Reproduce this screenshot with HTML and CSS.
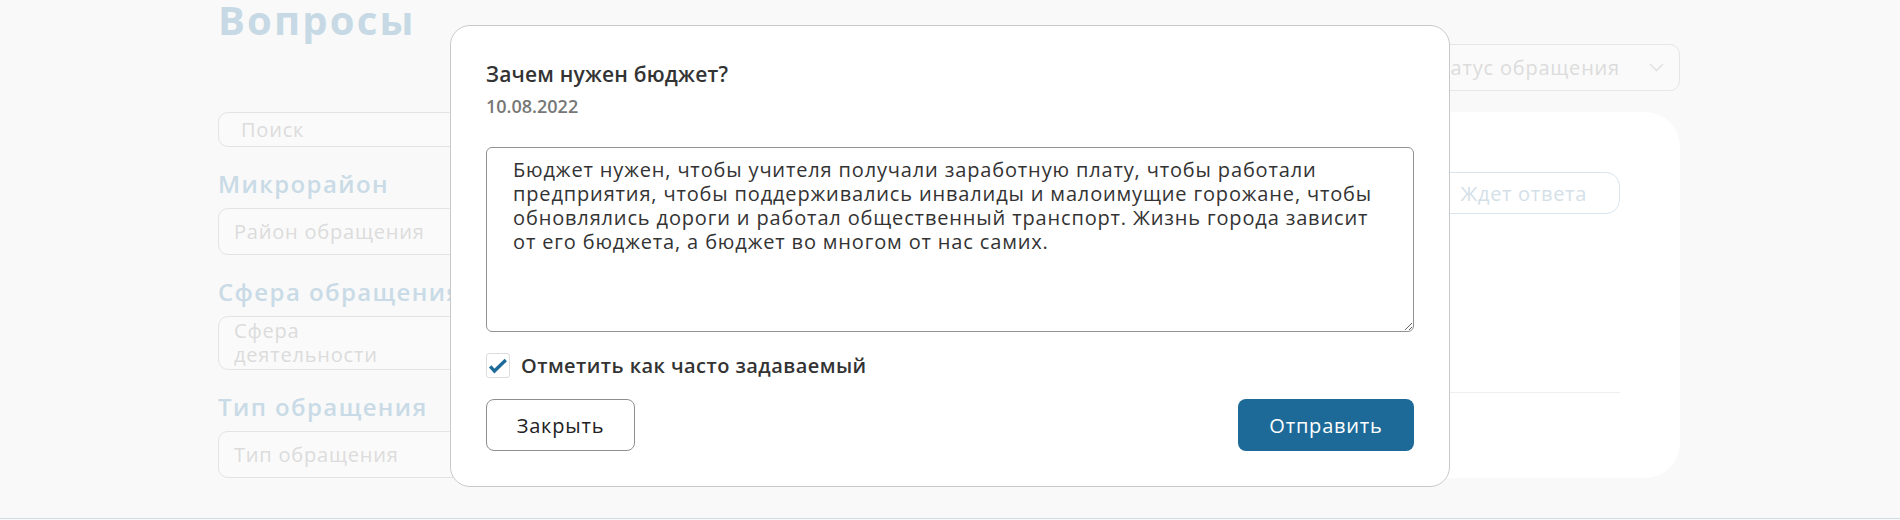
FILE: index.html
```html
<!DOCTYPE html>
<html lang="ru">
<head>
<meta charset="utf-8">
<title>Вопросы</title>
<link rel="stylesheet" href="styles.css">
</head>
<body>
<div class="page">
  <header class="page-head">
    <h1 class="page-title">Вопросы</h1>
    <div class="select">
      <span class="select-text">Статус обращения</span>
      <svg class="chevron" width="15" height="9" viewBox="0 0 15 9" aria-hidden="true"><path d="M1 1l6.5 6.5L14 1" fill="none" stroke="#e3e3e3" stroke-width="1.6"/></svg>
    </div>
  </header>
  <div class="layout">
    <aside class="sidebar">
      <div class="field field-search">Поиск</div>
      <h2 class="filter-title">Микрорайон</h2>
      <div class="field">Район обращения</div>
      <h2 class="filter-title">Сфера обращения</h2>
      <div class="field field-multi"><span class="field-multi-text">Сфера деятельности</span></div>
      <h2 class="filter-title">Тип обращения</h2>
      <div class="field">Тип обращения</div>
    </aside>
    <main class="card">
      <div class="question">
        <div class="question-body">
          <div class="question-title">Зачем нужен бюджет?</div>
          <div class="question-date">10.08.2022</div>
        </div>
        <span class="tag">Ждет ответа</span>
      </div>
    </main>
  </div>
</div>
<footer class="footer"></footer>

<div class="modal" role="dialog" aria-modal="true">
  <h3 class="modal-title">Зачем нужен бюджет?</h3>
  <div class="modal-date">10.08.2022</div>
  <textarea class="answer">Бюджет нужен, чтобы учителя получали заработную плату, чтобы работали предприятия, чтобы поддерживались инвалиды и малоимущие горожане, чтобы обновлялись дороги и работал общественный транспорт. Жизнь города зависит от его бюджета, а бюджет во многом от нас самих.</textarea>
  <label class="check">
    <span class="check-box"><svg width="24" height="24" viewBox="0 0 24 24" aria-hidden="true"><path d="M3.5 12.5l4.6 5L20.5 5.5" fill="none" stroke="#1d6a99" stroke-width="3.6"/></svg></span>
    <span class="check-label">Отметить как часто задаваемый</span>
  </label>
  <div class="modal-actions">
    <button class="btn btn-outline" type="button">Закрыть</button>
    <button class="btn btn-primary" type="button">Отправить</button>
  </div>
</div>
</body>
</html>
```
FILE: styles.css
```css
* {
  box-sizing: border-box;
}

html, body {
  margin: 0;
  padding: 0;
}

body {
  background: #f9f9f9;
  font-family: "Open Sans", "Noto Sans", sans-serif;
  color: #333;
  overflow: hidden;
}

.page {
  width: 1462px;
  margin-left: 218px;
  min-height: 518px;
}

.page-head {
  display: flex;
  justify-content: space-between;
  align-items: flex-start;
}

.page-title {
  margin: 0;
  font-size: 40px;
  line-height: 40px;
  font-weight: 700;
  letter-spacing: 2.2px;
  color: #c6d9e4;
}

.select {
  margin-top: 44px;
  height: 47px;
  display: flex;
  align-items: center;
  padding: 0 15px 0 22px;
  border: 1px solid #e6e6e6;
  border-radius: 10px;
  background: #fafafa;
}

.select-text {
  font-size: 20px;
  letter-spacing: 0.8px;
  color: #dcdcdc;
}

.chevron {
  margin-left: 29px;
  display: block;
}

.layout {
  margin-top: 21px;
  display: grid;
  grid-template-columns: 260px 1fr;
  column-gap: 40px;
}

.sidebar {
  display: flex;
  flex-direction: column;
}

.field {
  height: 47px;
  display: flex;
  align-items: center;
  padding: 0 15px;
  border: 1px solid #e4e4e4;
  border-radius: 10px;
  background: #fafafa;
  font-size: 20px;
  letter-spacing: 0.8px;
  color: #dcdcdc;
  white-space: nowrap;
}

.field-search {
  height: 35px;
  padding-left: 22px;
}

.field-multi {
  height: 54px;
  align-items: flex-start;
  padding: 2px 60px 0 15px;
  white-space: normal;
  line-height: 24px;
}

.filter-title {
  margin: 22px 0 10px;
  font-size: 24px;
  line-height: 29px;
  font-weight: 600;
  letter-spacing: 1.4px;
  color: #c9dbe6;
  white-space: nowrap;
}

.card {
  background: #fff;
  border-radius: 35px;
  padding: 60px;
}

.question {
  height: 221px;
  display: flex;
  justify-content: space-between;
  align-items: flex-start;
  border-bottom: 1px solid #efefef;
}

.question-title {
  font-size: 20px;
  font-weight: 600;
  color: #d2d2d2;
}

.question-date {
  margin-top: 8px;
  font-size: 18px;
  color: #dedede;
}

.tag {
  height: 42px;
  display: flex;
  align-items: center;
  padding: 0 32px;
  border: 1px solid #d9e5ee;
  border-radius: 14px;
  font-size: 20px;
  letter-spacing: 0.7px;
  color: #d4e0e8;
}

.footer {
  border-top: 1px solid #cfdde7;
}

/* Modal */
.modal {
  position: fixed;
  top: 25px;
  left: 50%;
  transform: translateX(-50%);
  width: 1000px;
  padding: 35px;
  background: #fff;
  border: 1px solid #c9c9c9;
  border-radius: 20px;
}

.modal-title {
  margin: 0;
  font-size: 21px;
  line-height: 26px;
  font-weight: 600;
  letter-spacing: 0.2px;
  color: #333;
}

.modal-date {
  margin-top: 8px;
  font-size: 18px;
  line-height: 22px;
  font-weight: 600;
  color: #777;
}

.answer {
  display: block;
  width: 100%;
  height: 185px;
  margin-top: 30px;
  padding: 10px 16px 10px 26px;
  border: 1px solid #929292;
  border-radius: 6px;
  font-family: "Open Sans", "Noto Sans", sans-serif;
  font-size: 20px;
  line-height: 24px;
  letter-spacing: 0.85px;
  color: #333;
  background: #fff;
  outline: none;
}

.check {
  margin-top: 21px;
  height: 25px;
  display: flex;
  align-items: center;
  gap: 11px;
}

.check-box {
  width: 24px;
  height: 25px;
  display: flex;
  align-items: center;
  justify-content: center;
  border: 1px solid #dcdcdc;
  border-radius: 3px;
  background: #fff;
}

.check-box svg {
  display: block;
}

.check-label {
  font-size: 20px;
  font-weight: 600;
  letter-spacing: 0.45px;
  color: #333;
}

.modal-actions {
  margin-top: 21px;
  display: flex;
  justify-content: space-between;
}

.btn {
  height: 52px;
  border-radius: 8px;
  font-family: "Open Sans", "Noto Sans", sans-serif;
  font-size: 20px;
  letter-spacing: 0.8px;
  cursor: pointer;
}

.btn-outline {
  width: 149px;
  border: 1px solid #8e8e8e;
  background: #fff;
  color: #222;
}

.btn-primary {
  width: 176px;
  border: none;
  background: #1d6a99;
  color: #fff;
}
```
